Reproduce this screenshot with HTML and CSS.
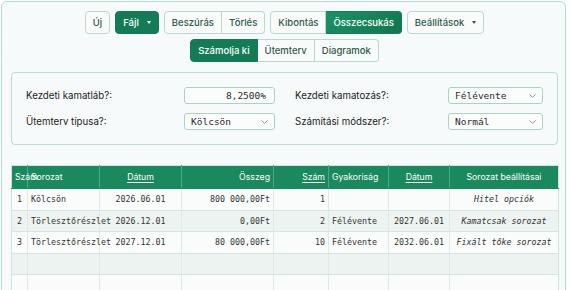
FILE: index.html
```html
<!DOCTYPE html>
<html lang="hu">
<head>
<meta charset="utf-8">
<link rel="stylesheet" href="styles.css">
</head>
<body>
<div class="app">
  <div class="toolbar">
    <div class="row">
      <button class="btn">Új</button>
      <button class="btn primary dd">Fájl<span class="caret white"></span></button>
      <div class="group">
        <button class="btn">Beszúrás</button>
        <button class="btn">Törlés</button>
      </div>
      <div class="group">
        <button class="btn">Kibontás</button>
        <button class="btn active">Összecsukás</button>
      </div>
      <button class="btn dd">Beállítások<span class="caret"></span></button>
    </div>
    <div class="row">
      <div class="group">
        <button class="btn primary">Számolja ki</button>
        <button class="btn">Ütemterv</button>
        <button class="btn">Diagramok</button>
      </div>
    </div>
  </div>

  <div class="form">
    <div class="label">Kezdeti kamatláb?:</div>
    <div class="field right">8,2500%</div>
    <div class="label label2">Kezdeti kamatozás?:</div>
    <div class="field select"><span>Félévente</span><svg class="chev" width="7" height="4" viewBox="0 0 7 4"><path d="M0.5 0.5 L3.5 3.3 L6.5 0.5" fill="none" stroke="#7a8a85" stroke-width="0.9"/></svg></div>

    <div class="label">Ütemterv típusa?:</div>
    <div class="field select"><span>Kölcsön</span><svg class="chev" width="7" height="4" viewBox="0 0 7 4"><path d="M0.5 0.5 L3.5 3.3 L6.5 0.5" fill="none" stroke="#7a8a85" stroke-width="0.9"/></svg></div>
    <div class="label label2">Számítási módszer?:</div>
    <div class="field select"><span>Normál</span><svg class="chev" width="7" height="4" viewBox="0 0 7 4"><path d="M0.5 0.5 L3.5 3.3 L6.5 0.5" fill="none" stroke="#7a8a85" stroke-width="0.9"/></svg></div>
  </div>

  <table class="grid">
    <colgroup>
      <col style="width:16px"><col style="width:72px"><col style="width:82px"><col style="width:92px">
      <col style="width:55px"><col style="width:60px"><col style="width:61px"><col style="width:109px">
    </colgroup>
    <thead>
      <tr>
        <th class="l">Szám</th>
        <th class="l">Sorozat</th>
        <th class="c"><u>Dátum</u></th>
        <th class="r">Összeg</th>
        <th class="r"><u>Szám</u></th>
        <th class="l">Gyakoriság</th>
        <th class="c"><u>Dátum</u></th>
        <th class="c">Sorozat beállításai</th>
      </tr>
    </thead>
    <tbody>
      <tr>
        <td class="c">1</td><td class="l">Kölcsön</td><td class="c">2026.06.01</td><td class="r">800 000,00Ft</td>
        <td class="r">1</td><td class="l"></td><td class="c"></td><td class="c i">Hitel opciók</td>
      </tr>
      <tr>
        <td class="c">2</td><td class="l">Törlesztőrészlet</td><td class="c">2026.12.01</td><td class="r">0,00Ft</td>
        <td class="r">2</td><td class="l">Félévente</td><td class="c">2027.06.01</td><td class="c i">Kamatcsak sorozat</td>
      </tr>
      <tr>
        <td class="c">3</td><td class="l">Törlesztőrészlet</td><td class="c">2027.12.01</td><td class="r">80 000,00Ft</td>
        <td class="r">10</td><td class="l">Félévente</td><td class="c">2032.06.01</td><td class="c i">Fixált tőke sorozat</td>
      </tr>
      <tr><td></td><td></td><td></td><td></td><td></td><td></td><td></td><td></td></tr>
      <tr><td></td><td></td><td></td><td></td><td></td><td></td><td></td><td></td></tr>
      <tr><td></td><td></td><td></td><td></td><td></td><td></td><td></td><td></td></tr>
    </tbody>
  </table>
</div>
</body>
</html>
```
FILE: styles.css
```css
html, body {
  margin: 0;
  padding: 0;
  background: #ffffff;
}
body {
  font-family: Inter, "Noto Sans", sans-serif;
  overflow: hidden;
  height: 290px;
}
.app {
  margin: 1px 4px 0 1px;
  border: 1px solid #b4ddcf;
  border-radius: 6px;
  background: #f7fafa;
  padding: 9px 7px 20px 9px;
  min-height: 300px;
}
.toolbar {
  display: flex;
  flex-direction: column;
  align-items: center;
  gap: 5px;
}
.row {
  display: flex;
  gap: 5px;
  align-items: center;
}
.btn {
  font-family: Inter, "Noto Sans", sans-serif;
  font-size: 9.5px;
  font-weight: 500;
  color: #2f5a4b;
  background: #f9fbfb;
  border: 1px solid #b6dacc;
  border-radius: 4px;
  height: 23px;
  padding: 0 7px;
  display: flex;
  align-items: center;
  white-space: nowrap;
  cursor: pointer;
}
.btn.primary {
  background: #137c57;
  border-color: #137c57;
  color: #ffffff;
}
.btn.active {
  background: linear-gradient(135deg, #1b9263, #10764f);
  border-color: #138058;
  color: #ffffff;
}
.btn.dd { gap: 8px; }
.caret {
  width: 0;
  height: 0;
  border-left: 2.5px solid transparent;
  border-right: 2.5px solid transparent;
  border-top: 3px solid #2f5a4b;
}
.caret.white { border-top-color: #ffffff; }
.group {
  display: flex;
}
.group .btn {
  border-radius: 0;
}
.group .btn + .btn {
  border-left: none;
}
.group .btn:first-child { border-radius: 4px 0 0 4px; }
.group .btn:last-child { border-radius: 0 4px 4px 0; }

.form {
  margin-top: 10px;
  border: 1px solid #b9ddd0;
  border-radius: 4px;
  padding: 14px;
  display: grid;
  grid-template-columns: 158px 91px 1fr 95px;
  grid-auto-rows: 17px;
  row-gap: 9px;
  align-items: center;
}
.label {
  font-size: 9.7px;
  color: #222;
}
.label2 { padding-left: 20px; }
.field {
  height: 17px;
  box-sizing: border-box;
  border: 1px solid #a9d4c5;
  border-radius: 3px;
  background: #fbfdfd;
  font-family: "DejaVu Sans Mono", "Liberation Mono", monospace;
  font-size: 9.5px;
  color: #2a2a2a;
  display: flex;
  align-items: center;
  padding: 0 6px;
}
.field.right { justify-content: flex-end; padding-right: 8px; }
.field.select { justify-content: space-between; padding-right: 6px; }
.chev { display: block; }

.grid {
  margin-top: 20px;
  border-collapse: collapse;
  table-layout: fixed;
  width: 547px;
  border: 1px solid #cfe2db;
}
.grid th {
  background: #1a8a5e;
  color: #ffffff;
  font-family: Inter, "Noto Sans", sans-serif;
  font-size: 8.7px;
  font-weight: 400;
  height: 22px;
  padding: 0 3px;
  white-space: nowrap;
  overflow: visible;
  border-left: 1px solid #4fa988;
  border-bottom: 1px solid #1a8a5e;
}
.grid th:first-child { border-left: none; }
.grid th u { text-decoration-thickness: 1px; text-underline-offset: 1.5px; }
.grid td {
  font-family: "DejaVu Sans Mono", "Liberation Mono", monospace;
  font-size: 8.3px;
  color: #333;
  height: 20.5px;
  padding: 0 3px;
  white-space: nowrap;
  overflow: visible;
  border-left: 1px solid #e0e9e6;
  border-bottom: 1px solid #d9e5e1;
}
.grid td:first-child { border-left: none; }
.grid tbody tr:nth-child(odd) td { background: #fafcfc; }
.grid tbody tr:nth-child(even) td { background: #edf3f1; }
.l { text-align: left; }
.c { text-align: center; }
.r { text-align: right; }
.i { font-style: italic; }
```
